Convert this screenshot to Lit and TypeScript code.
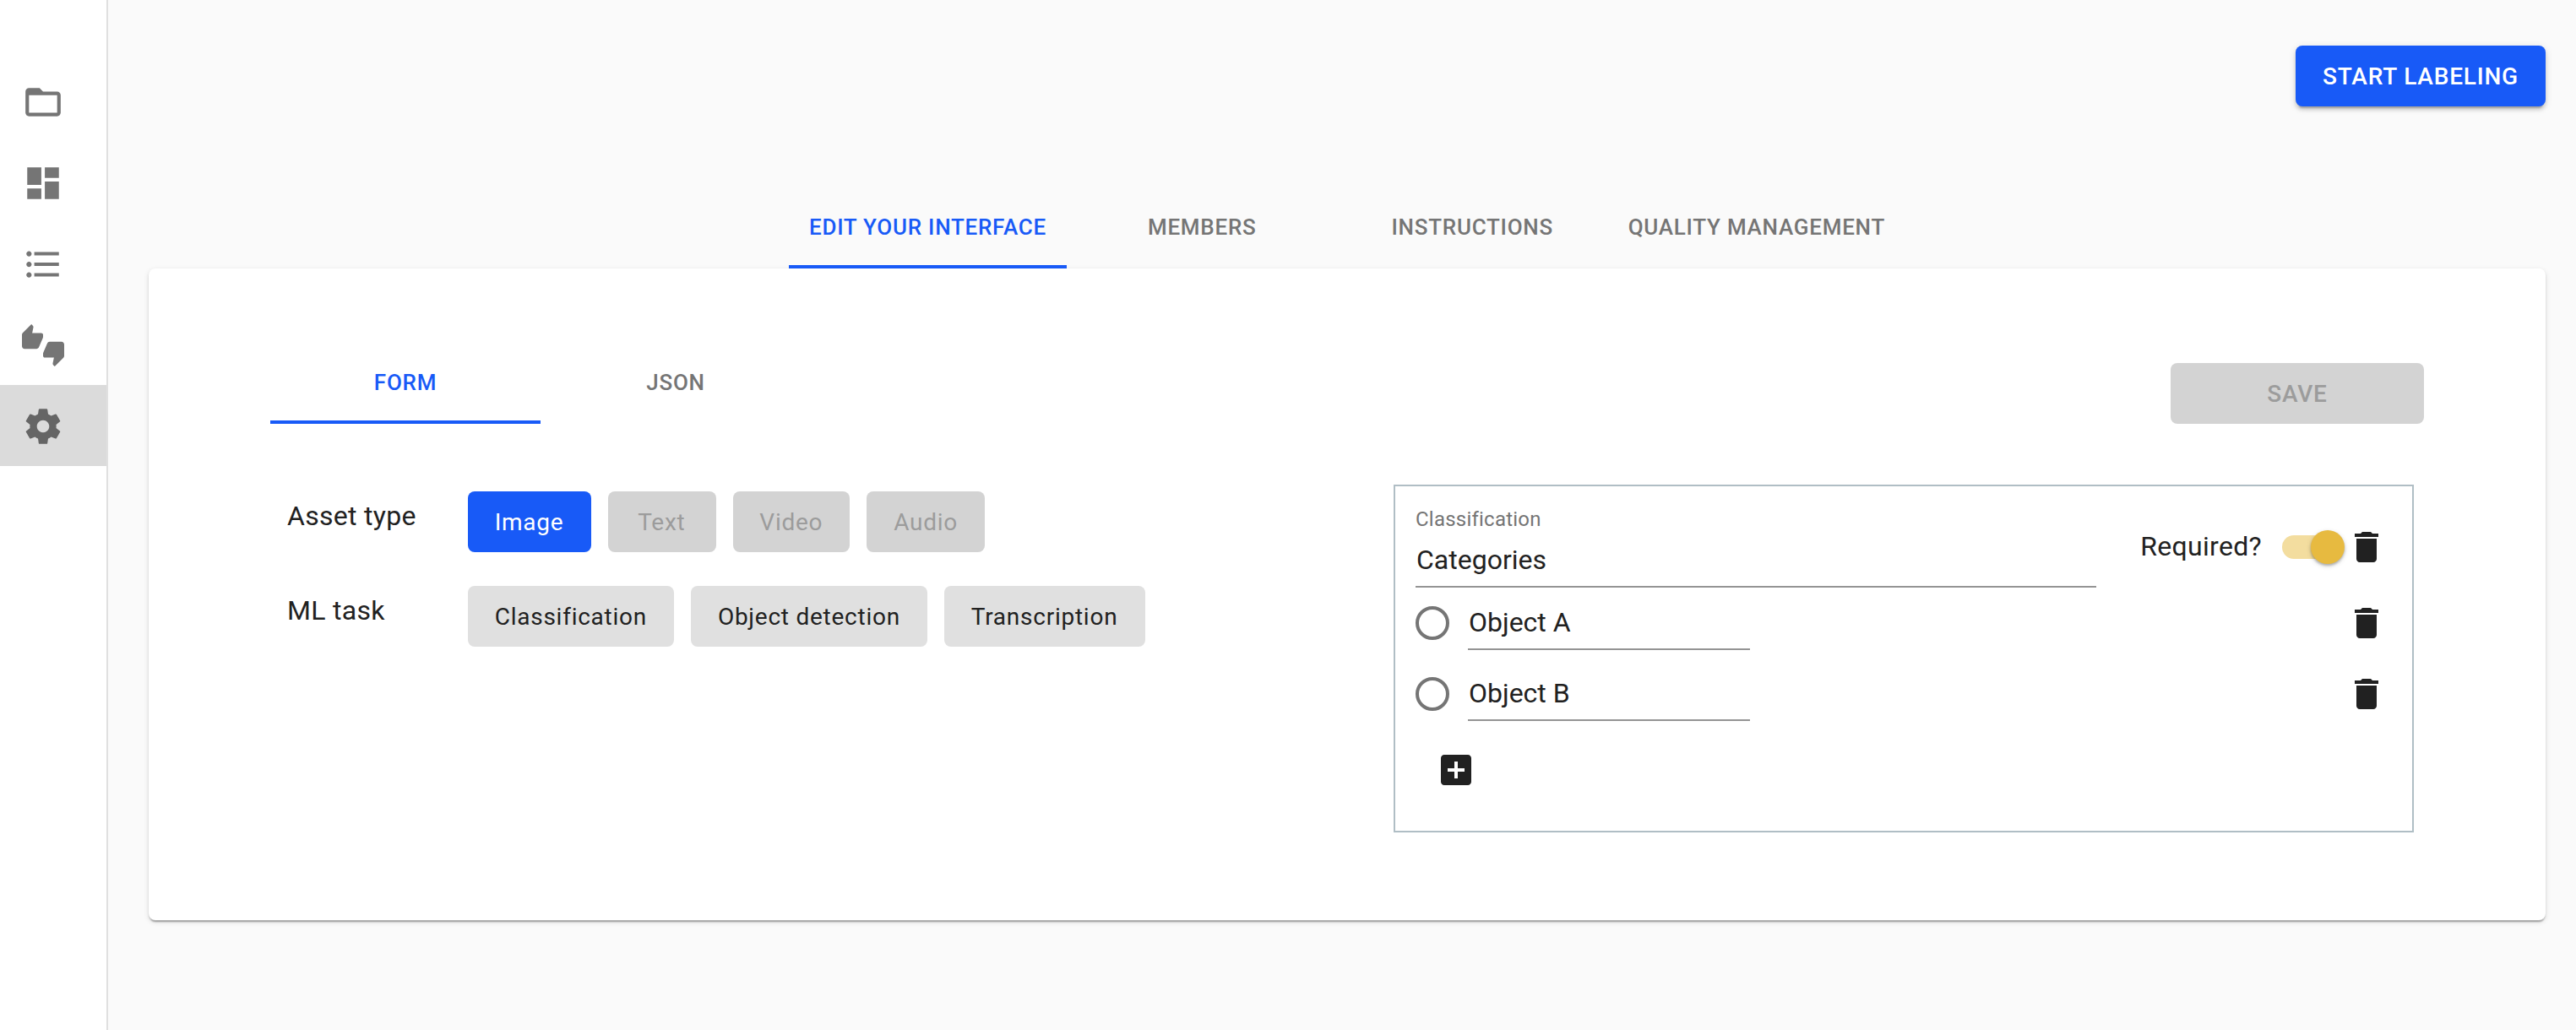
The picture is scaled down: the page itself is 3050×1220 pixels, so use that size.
import { LitElement, html, css, svg } from "lit";
import { customElement, property } from "lit/decorators.js";
import { classMap } from "lit/directives/class-map.js";

const ICONS: Record<string, string> = {
  folder:
    "M20 6h-8l-2-2H4c-1.1 0-1.99.9-1.99 2L2 18c0 1.1.9 2 2 2h16c1.1 0 2-.9 2-2V8c0-1.1-.9-2-2-2zm0 12H4V8h16v10z",
  dashboard: "M3 13h8V3H3v10zm0 8h8v-6H3v6zm10 0h8V11h-8v10zm0-18v6h8V3h-8z",
  list: "M4 10.5c-.83 0-1.5.67-1.5 1.5s.67 1.5 1.5 1.5 1.5-.67 1.5-1.5-.67-1.5-1.5-1.5zm0-6c-.83 0-1.5.67-1.5 1.5S3.17 7.5 4 7.5 5.5 6.83 5.5 6 4.83 4.5 4 4.5zm0 12c-.83 0-1.5.68-1.5 1.5s.68 1.5 1.5 1.5 1.5-.68 1.5-1.5-.67-1.5-1.5-1.5zM7 19h14v-2H7v2zm0-6h14v-2H7v2zm0-8v2h14V5H7z",
  thumbs:
    "M12 6c0-.55-.45-1-1-1H5.82l.66-3.18.02-.23c0-.31-.13-.59-.33-.8L5.38 0 .44 4.94C.17 5.21 0 5.59 0 6v6.5c0 .83.67 1.5 1.5 1.5h6.75c.62 0 1.15-.38 1.38-.91l2.26-5.29c.07-.17.11-.36.11-.55V6zm10.5 4h-6.75c-.62 0-1.15.38-1.38.91l-2.26 5.29c-.07.17-.11.36-.11.55V18c0 .55.45 1 1 1h5.18l-.66 3.18-.02.24c0 .31.13.59.33.8l.79.78 4.94-4.94c.27-.27.44-.65.44-1.06v-6.5c0-.83-.67-1.5-1.5-1.5z",
  settings:
    "M19.43 12.98c.04-.32.07-.64.07-.98s-.03-.66-.07-.98l2.11-1.65c.19-.15.24-.42.12-.64l-2-3.46c-.12-.22-.39-.3-.61-.22l-2.49 1c-.52-.4-1.08-.73-1.69-.98l-.38-2.65C14.46 2.18 14.25 2 14 2h-4c-.25 0-.46.18-.49.42l-.38 2.65c-.61.25-1.17.59-1.69.98l-2.49-1c-.23-.09-.49 0-.61.22l-2 3.46c-.13.22-.07.49.12.64l2.11 1.65c-.04.32-.07.65-.07.98s.03.66.07.98l-2.11 1.65c-.19.15-.24.42-.12.64l2 3.46c.12.22.39.3.61.22l2.49-1c.52.4 1.08.73 1.69.98l.38 2.65c.03.24.24.42.49.42h4c.25 0 .46-.18.49-.42l.38-2.65c.61-.25 1.17-.59 1.69-.98l2.49 1c.23.09.49 0 .61-.22l2-3.46c.12-.22.07-.49-.12-.64l-2.11-1.65zM12 15.5c-1.93 0-3.5-1.57-3.5-3.5s1.57-3.5 3.5-3.5 3.5 1.57 3.5 3.5-1.57 3.5-3.5 3.5z",
  trash:
    "M6 19c0 1.1.9 2 2 2h8c1.1 0 2-.9 2-2V7H6v12zM19 4h-3.5l-1-1h-5l-1 1H5v2h14V4z",
  addBox:
    "M19 3H5c-1.11 0-2 .9-2 2v14c0 1.1.89 2 2 2h14c1.1 0 2-.9 2-2V5c0-1.1-.9-2-2-2zm-2 10h-4v4h-2v-4H7v-2h4V7h2v4h4v2z",
};

@customElement("md-icon")
export class MdIcon extends LitElement {
  @property() name = "";

  static styles = css`
    :host {
      display: block;
      width: 48px;
      height: 48px;
      flex: none;
    }
    .glyph {
      display: block;
      width: 100%;
      height: 100%;
      fill: currentColor;
    }
  `;

  render() {
    return html`<svg class="glyph" viewBox="0 0 24 24">
      ${svg`<path d=${ICONS[this.name] ?? ""}></path>`}
    </svg>`;
  }
}

@customElement("nav-rail")
export class NavRail extends LitElement {
  @property() active = "settings";

  static styles = css`
    :host {
      display: flex;
      flex-direction: column;
      box-sizing: border-box;
      width: 128px;
      padding-top: 72px;
      background: #fff;
      border-right: 2px solid #e0e0e0;
      color: #757575;
    }
    .item {
      box-sizing: border-box;
      height: 96px;
      padding: 24px 0 0 26px;
    }
    .item.active {
      background: #dbdbdb;
      color: #656565;
    }
    .icon {
      width: 50px;
      height: 50px;
    }
  `;

  render() {
    return ["folder", "dashboard", "list", "thumbs", "settings"].map(
      (name) => html`<div class=${classMap({ item: true, active: name === this.active })}>
        <md-icon class="icon" name=${name}></md-icon>
      </div>`
    );
  }
}

@customElement("tab-bar")
export class TabBar extends LitElement {
  @property({ attribute: false }) tabs: string[] = [];
  @property() active = "";

  static styles = css`
    :host {
      display: flex;
    }
    .tab {
      display: flex;
      align-items: center;
      justify-content: center;
      box-sizing: border-box;
      min-width: 320px;
      height: 96px;
      padding: 2px 24.4px 0;
      border-bottom: 4px solid transparent;
      font-size: 26px;
      font-weight: 500;
      letter-spacing: 0.02857em;
      white-space: nowrap;
      color: #757575;
    }
    .tab.active {
      color: #185af7;
      border-bottom-color: #185af7;
    }
  `;

  render() {
    return this.tabs.map(
      (t) => html`<div class=${classMap({ tab: true, active: t === this.active })}>${t}</div>`
    );
  }
}

@customElement("choice-row")
export class ChoiceRow extends LitElement {
  @property() label = "";
  @property({ attribute: false }) choices: { text: string; kind: string }[] = [];

  static styles = css`
    :host {
      display: flex;
      align-items: flex-start;
    }
    .label {
      width: 214px;
      padding-top: 9px;
      font-size: 32px;
      line-height: 40px;
      letter-spacing: 0.00938em;
    }
    .choices {
      display: flex;
      gap: 20px;
    }
    .choice {
      display: flex;
      align-items: center;
      justify-content: center;
      box-sizing: border-box;
      min-width: 128px;
      height: 72px;
      padding: 0 32.2px 0 31.7px;
      border-radius: 8px;
      background: #e0e0e0;
      font-size: 28px;
      letter-spacing: 0.75px;
      white-space: nowrap;
    }
    .choice.selected {
      background: #185af7;
      color: #fff;
    }
    .choice.disabled {
      background: #d3d3d3;
      color: #9c9c9c;
    }
  `;

  render() {
    return html`<div class="label">${this.label}</div>
      <div class="choices">
        ${this.choices.map((c) => html`<div class="choice ${c.kind}">${c.text}</div>`)}
      </div>`;
  }
}

@customElement("job-editor")
export class JobEditor extends LitElement {
  @property({ attribute: false }) options = ["Object A", "Object B"];

  static styles = css`
    :host {
      display: block;
      box-sizing: border-box;
      width: 1208px;
      height: 412px;
      padding: 24px 30px 0 24px;
      border: 2px solid #b0bec5;
    }
    .head {
      display: flex;
      height: 96px;
    }
    .field {
      box-sizing: border-box;
      width: 806px;
      border-bottom: 2px solid #949494;
    }
    .caption {
      font-size: 24px;
      line-height: 28px;
      padding-top: 1px;
      letter-spacing: 0.00938em;
      color: #757575;
    }
    .value {
      font-size: 32px;
      line-height: 38px;
      padding: 15px 0 0 1px;
    }
    .controls {
      flex: 1;
      display: flex;
      align-items: center;
      justify-content: flex-end;
    }
    .required {
      font-size: 32px;
      letter-spacing: 0.00938em;
      margin-right: 24px;
      padding-bottom: 2px;
    }
    .switch {
      display: flex;
      align-items: center;
      justify-content: flex-end;
      width: 68px;
      height: 28px;
      border-radius: 14px;
      background: #f3dd9f;
      margin-right: 8px;
    }
    .thumb {
      flex: none;
      width: 40px;
      height: 40px;
      margin-right: -6px;
      border-radius: 50%;
      background: #e7ba40;
      box-shadow: 0 2px 3px rgba(0, 0, 0, 0.25), 0 2px 6px rgba(0, 0, 0, 0.14);
    }
    .option {
      display: flex;
      align-items: center;
      height: 84px;
    }
    .radio {
      box-sizing: border-box;
      width: 40px;
      height: 40px;
      border: 4px solid #757575;
      border-radius: 50%;
    }
    .entry {
      box-sizing: border-box;
      width: 334px;
      height: 60px;
      margin: 4px auto 0 22px;
      padding: 8px 0 0 1px;
      border-bottom: 2px solid #949494;
      font-size: 32px;
      line-height: 38px;
    }
    .icon {
      color: #212121;
    }
    .add {
      margin: 24px 0 0 24px;
      color: #212121;
    }
  `;

  render() {
    return html`<div class="head">
        <div class="field">
          <div class="caption">Classification</div>
          <div class="value">Categories</div>
        </div>
        <div class="controls">
          <span class="required">Required?</span>
          <span class="switch"><span class="thumb"></span></span>
          <md-icon class="icon" name="trash"></md-icon>
        </div>
      </div>
      ${this.options.map(
        (o) => html`<div class="option">
          <span class="radio"></span>
          <span class="entry">${o}</span>
          <md-icon class="icon" name="trash"></md-icon>
        </div>`
      )}
      <md-icon class="add" name="addBox"></md-icon>`;
  }
}

@customElement("app-root")
export class AppRoot extends LitElement {
  static styles = css`
    :host {
      display: flex;
      width: 100%;
      height: 1220px;
      overflow: hidden;
      background: #fafafa;
      color: #212121;
      font-family: Roboto, "Liberation Sans", sans-serif;
      line-height: normal;
    }
    .main {
      flex: 1;
      display: flex;
      flex-direction: column;
      padding: 54px 36px 0 48px;
    }
    .button {
      display: flex;
      align-items: center;
      justify-content: center;
      box-sizing: border-box;
      height: 72px;
      border-radius: 8px;
      font-size: 28px;
      font-weight: 500;
      letter-spacing: 0.02857em;
    }
    .start {
      align-self: flex-end;
      width: 296px;
      background: #185af7;
      color: #fff;
      box-shadow: 0 6px 2px -4px rgba(0, 0, 0, 0.2), 0 4px 4px rgba(0, 0, 0, 0.14),
        0 2px 10px rgba(0, 0, 0, 0.12);
    }
    .sections {
      align-self: center;
      margin-top: 96px;
      z-index: 1;
    }
    .card {
      box-sizing: border-box;
      height: 772px;
      padding: 88px 144px 0;
      border-radius: 8px;
      background: #fff;
      box-shadow: 0 4px 2px -2px rgba(0, 0, 0, 0.2), 0 2px 2px rgba(0, 0, 0, 0.14),
        0 2px 6px rgba(0, 0, 0, 0.12);
    }
    .toolbar {
      display: flex;
      align-items: flex-end;
      justify-content: space-between;
    }
    .save {
      width: 300px;
      background: #d3d3d3;
      color: #9c9c9c;
    }
    .body {
      display: flex;
      justify-content: space-between;
      padding: 72px 12px 0 20px;
    }
    .settings {
      display: flex;
      flex-direction: column;
      gap: 40px;
      padding-top: 8px;
    }
  `;

  render() {
    return html`<nav-rail></nav-rail>
      <main class="main">
        <div class="button start">START LABELING</div>
        <tab-bar
          class="sections"
          .tabs=${["EDIT YOUR INTERFACE", "MEMBERS", "INSTRUCTIONS", "QUALITY MANAGEMENT"]}
          active="EDIT YOUR INTERFACE"
        ></tab-bar>
        <section class="card">
          <div class="toolbar">
            <tab-bar .tabs=${["FORM", "JSON"]} active="FORM"></tab-bar>
            <div class="button save">SAVE</div>
          </div>
          <div class="body">
            <div class="settings">
              <choice-row
                label="Asset type"
                .choices=${[
                  { text: "Image", kind: "selected" },
                  { text: "Text", kind: "disabled" },
                  { text: "Video", kind: "disabled" },
                  { text: "Audio", kind: "disabled" },
                ]}
              ></choice-row>
              <choice-row
                label="ML task"
                .choices=${[
                  { text: "Classification", kind: "" },
                  { text: "Object detection", kind: "" },
                  { text: "Transcription", kind: "" },
                ]}
              ></choice-row>
            </div>
            <job-editor></job-editor>
          </div>
        </section>
      </main>`;
  }
}
